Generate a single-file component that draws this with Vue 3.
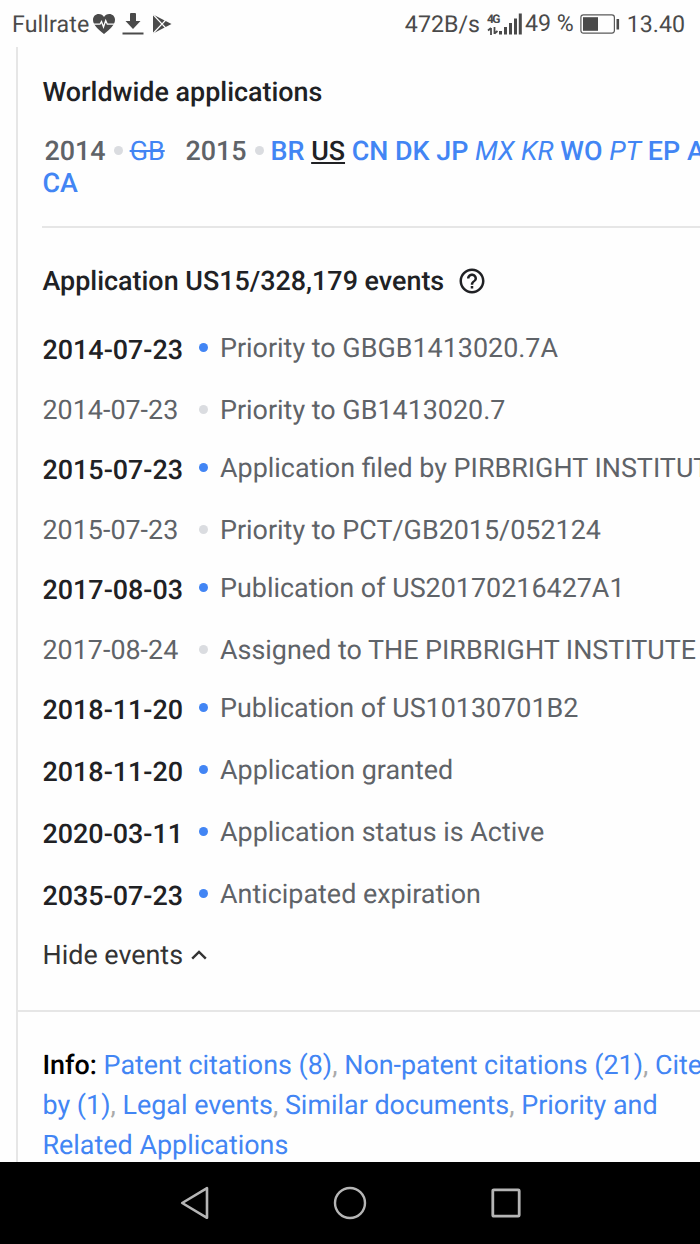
<template>
  <div class="screen">
    <header class="status-bar">
      <span class="carrier">Fullrate</span>
      <svg class="icon-heart" viewBox="0 0 24 22" width="24" height="22">
        <path d="M12 21C6 16.500 1 12 1 6.800C1 3.300 3.600 1 6.700 1C9 1 11 2.100 12 3.900C13 2.100 15 1 17.300 1C20.400 1 23 3.300 23 6.800C23 12 18 16.500 12 21Z" fill="#4a4a4a" />
        <path d="M1 11.200H8L9.500 8.500L11.500 14L13.700 7.500L15.300 11.200H23" fill="none" stroke="#fff" stroke-width="1.300" />
      </svg>
      <svg class="icon-download" viewBox="0 0 22 23" width="22" height="23">
        <path d="M8 2Q8 1 9 1H13Q14 1 14 2V9H18.500L11 17L3.500 9H8Z" fill="#4a4a4a" />
        <path d="M0.500 21.500H21.500" stroke="#4a4a4a" stroke-width="2" />
      </svg>
      <svg class="icon-play" viewBox="0 0 20 20" width="20" height="20">
        <path d="M1 0.500L19.500 10L1 19.500Z" fill="#4a4a4a" />
        <path d="M1 0.500L13.800 14M1 19.500L13.800 6" fill="none" stroke="#fff" stroke-width="1.100" />
      </svg>
      <span class="speed">472B/s</span>
      <span class="signal">
        <span class="network">
          <span class="network-type">4G</span>
          <svg viewBox="0 0 12 8" width="12" height="8">
            <path d="M4 8V1M1 3.500L4 1M7.500 0V7M10.500 4L7.500 6.500" fill="none" stroke="#4a4a4a" stroke-width="1.800" />
          </svg>
        </span>
        <svg class="bars" viewBox="0 0 23 22" width="23" height="22">
          <path d="M1.500 18V21.500M6.500 14V21.500M11.500 10V21.500M16.500 5.500V21.500M21.300 0.500V21.500" fill="none" stroke="#4a4a4a" stroke-width="3" />
        </svg>
      </span>
      <span class="percent">49 %</span>
      <svg class="battery" viewBox="0 0 40 20" width="40" height="20">
        <rect x="0.900" y="0.900" width="33.500" height="18.200" rx="2.500" fill="none" stroke="#5a5a5a" stroke-width="1.200" />
        <rect x="3" y="3.200" width="15" height="13.600" fill="#4a4a4a" />
        <path d="M37.800 5V15.500" stroke="#4a4a4a" stroke-width="2.600" />
      </svg>
      <span class="clock">13.40</span>
    </header>

    <main class="page">
      <section class="worldwide">
        <h3 class="title">Worldwide applications</h3>
        <div class="countries">
          <template v-for="group in applications" :key="group.year">
            <span class="year">{{ group.year }}</span><span class="bullet"></span>
            <template v-for="c in group.countries" :key="c.code">
              <a :class="['country', c.state]">{{ c.code }}</a>{{ ' ' }}
            </template>
          </template>
        </div>
      </section>

      <section class="events">
        <h3 class="title title--events">
          <span>Application US15/328,179 events</span>
          <svg class="help" viewBox="0 0 24 24" width="30" height="30">
            <path d="M11 18h2v-2h-2v2zm1-16C6.480 2 2 6.480 2 12s4.480 10 10 10 10-4.480 10-10S17.520 2 12 2zm0 18c-4.410 0-8-3.590-8-8s3.590-8 8-8 8 3.590 8 8-3.590 8-8 8zm0-14c-2.210 0-4 1.790-4 4h2c0-1.100.9-2 2-2s2 .9 2 2c0 2-3 1.750-3 5h2c0-2.250 3-2.500 3-5 0-2.210-1.790-4-4-4z" fill="#202124" />
          </svg>
        </h3>
        <div
          v-for="(event, i) in events"
          :key="i"
          :class="['event', { 'event--key': event.key }]"
        >
          <span class="date">{{ event.date }}</span>
          <span class="dot"></span>
          <span class="label">{{ event.label }}</span>
        </div>
        <div class="toggle">
          <span>Hide events</span>
          <svg viewBox="0 0 16 10" width="16" height="10">
            <path d="M1.200 8.700L8 1.900L14.800 8.700" fill="none" stroke="#333" stroke-width="2.400" />
          </svg>
        </div>
      </section>

      <section class="info">
        <b>Info: </b>
        <template v-for="(link, i) in links" :key="link">
          <a>{{ link }}</a><template v-if="i < links.length - 1">, </template>
        </template>
      </section>
    </main>

    <nav class="nav-bar">
      <svg viewBox="0 0 30 34" width="30" height="34">
        <path d="M27 2.200V31.800L2.200 17Z" fill="none" stroke="#b5b5b5" stroke-width="2.600" stroke-linejoin="round" />
      </svg>
      <svg viewBox="0 0 34 34" width="34" height="34">
        <circle cx="17" cy="17" r="15" fill="none" stroke="#b5b5b5" stroke-width="2.400" />
      </svg>
      <svg viewBox="0 0 30 30" width="30" height="30">
        <rect x="1.800" y="1.800" width="26.400" height="26.400" rx="1" fill="none" stroke="#b5b5b5" stroke-width="2.800" />
      </svg>
    </nav>
  </div>
</template>

<script setup>
const applications = [
  { year: '2014', countries: [{ code: 'GB', state: 'ceased' }] },
  {
    year: '2015',
    countries: [
      { code: 'BR' },
      { code: 'US', state: 'current' },
      { code: 'CN' },
      { code: 'DK' },
      { code: 'JP' },
      { code: 'MX', state: 'unknown' },
      { code: 'KR', state: 'unknown' },
      { code: 'WO' },
      { code: 'PT', state: 'unknown' },
      { code: 'EP' },
      { code: 'AU' },
      { code: 'CA' },
    ],
  },
];

const events = [
  { date: '2014-07-23', label: 'Priority to GBGB1413020.7A', key: true },
  { date: '2014-07-23', label: 'Priority to GB1413020.7' },
  { date: '2015-07-23', label: 'Application filed by PIRBRIGHT INSTITUTE', key: true },
  { date: '2015-07-23', label: 'Priority to PCT/GB2015/052124' },
  { date: '2017-08-03', label: 'Publication of US20170216427A1', key: true },
  { date: '2017-08-24', label: 'Assigned to THE PIRBRIGHT INSTITUTE' },
  { date: '2018-11-20', label: 'Publication of US10130701B2', key: true },
  { date: '2018-11-20', label: 'Application granted', key: true },
  { date: '2020-03-11', label: 'Application status is Active', key: true },
  { date: '2035-07-23', label: 'Anticipated expiration', key: true },
];

const links = [
  'Patent citations (8)',
  'Non-patent citations (21)',
  'Cited by (1)',
  'Legal events',
  'Similar documents',
  'Priority and Related Applications',
];
</script>

<style>
body {
  margin: 0;
  background: #fefefe;
}
</style>

<style scoped>
.screen {
  display: flex;
  flex-direction: column;
  width: 700px;
  height: 1244px;
  overflow: hidden;
  background: #fefefe;
  font-family: Roboto, 'Liberation Sans', sans-serif;
  font-size: 26.9px;
  line-height: 40px;
  color: #5f6368;
  text-rendering: geometricPrecision;
}

.status-bar {
  display: flex;
  align-items: center;
  flex: none;
  height: 47px;
  padding: 0 15px 0 12px;
  box-sizing: border-box;
  font-size: 23.2px;
  color: #4a4a4a;
  white-space: nowrap;
}

.carrier {
  letter-spacing: 0.1px;
}

.percent {
  margin-left: 3px;
  padding-bottom: 2px;
}

.icon-heart {
  margin-left: 3px;
}

.icon-download {
  margin-left: 6px;
}

.icon-play {
  margin-left: 8px;
}

.speed {
  margin-left: auto;
}

.signal {
  display: flex;
  align-items: flex-end;
  margin-left: 7px;
}

.network {
  display: flex;
  flex-direction: column;
  width: 12px;
}

.network-type {
  height: 13px;
  font-size: 12px;
  font-weight: 700;
  line-height: 11px;
  letter-spacing: -1.5px;
}

.battery {
  margin-left: 6px;
}

.clock {
  margin-left: 7px;
}

.page {
  flex: 1;
  min-height: 0;
  width: 716px;
  margin-left: 16px;
  box-sizing: border-box;
  border-left: 2px solid #e6e6e6;
  overflow: hidden;
}

.title {
  margin: 0;
  font-size: 26.9px;
  font-weight: 500;
  color: #202124;
}

.worldwide {
  margin-left: 24px;
  padding: 25px 0 27px 0.5px;
  border-bottom: 2px solid #e6e6e6;
}

.countries {
  margin-top: 23px;
  line-height: 32px;
  font-weight: 500;
}

.year {
  margin-left: 2px;
}

.ceased + .year {
  margin-left: 14px;
}

.bullet {
  display: inline-block;
  width: 9px;
  height: 9px;
  margin: 0 7px 5px 8px;
  border-radius: 50%;
  background: #dadce0;
}

.country {
  color: #4285f4;
}

.ceased {
  font-weight: 400;
  text-decoration: line-through;
}

.current {
  color: #202124;
  text-decoration: underline;
}

.unknown {
  font-weight: 400;
  font-style: italic;
}

.events {
  padding: 33px 0 35px 24.5px;
  border-bottom: 2px solid #e6e6e6;
}

.title--events {
  display: flex;
  align-items: center;
  margin-bottom: 16px;
}

.help {
  margin-left: 13px;
}

.event {
  display: flex;
  height: 47px;
  padding-top: 11px;
  white-space: nowrap;
}

.event--key {
  height: 51px;
}

.date {
  width: 156.500px;
}

.event--key .date {
  padding-top: 2px;
  font-weight: 500;
  color: #202124;
}

.dot {
  width: 9px;
  height: 9px;
  margin: 15px 12px 0 0;
  border-radius: 50%;
  background: #dadce0;
}

.event--key .dot {
  background: #4285f4;
}

.toggle {
  display: flex;
  align-items: center;
  gap: 8px;
  margin-top: 10px;
  color: #333;
}

.info {
  padding: 33px 0 0 24.5px;
  color: #aaa;
}

.info b {
  font-weight: 500;
  color: #000;
}

.info a {
  color: #4285f4;
}

.nav-bar {
  display: flex;
  align-items: center;
  flex: none;
  height: 82px;
  padding-left: 180px;
  box-sizing: border-box;
  background: #000;
}

.nav-bar svg:nth-child(2) {
  margin: 0 124px 0 123px;
}
</style>
